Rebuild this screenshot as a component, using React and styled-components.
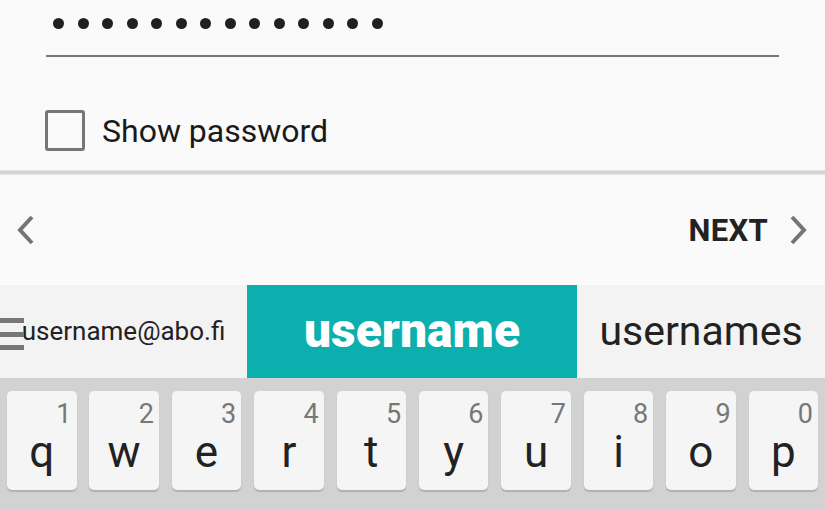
import React from 'react'
import styled, { createGlobalStyle } from 'styled-components'

const GlobalStyle = createGlobalStyle`
  body {
    margin: 0;
    background: #fafafa;
    font-family: Roboto, "Noto Sans", "Liberation Sans", sans-serif;
  }
`

const Screen = styled.div`
  width: 825px;
  height: 510px;
  display: flex;
  flex-direction: column;
  overflow: hidden;
  background: #fafafa;
`

const PasswordSection = styled.section`
  height: 170px;
  padding: 0 46px;
  box-sizing: border-box;
`

const Field = styled.div`
  display: flex;
  gap: 13.5px;
  padding: 18px 0 26px 7px;
  border-bottom: 2px solid #777;
`

const Dot = styled.span`
  width: 11px;
  height: 11px;
  border-radius: 50%;
  background: #202020;
`

const CheckRow = styled.label`
  display: flex;
  align-items: center;
  gap: 17px;
  margin-top: 53px;
  margin-left: -1px;
  font-size: 32px;
  color: #1a1a1a;
  line-height: 40px;
`

const Checkbox = styled.span`
  width: 40px;
  height: 41px;
  box-sizing: border-box;
  border: 3px solid #767676;
  border-radius: 3px;
  flex-shrink: 0;
`

const Divider = styled.div`
  height: 5px;
  background: linear-gradient(#e4e4e4, #cfcfcf 50%, #e8e8e8);
`

const NavBar = styled.nav`
  height: 110px;
  display: flex;
  align-items: center;
  justify-content: space-between;
  padding: 0 17px 0 16px;
`

const NavButton = styled.button`
  display: flex;
  align-items: center;
  gap: 20px;
  border: none;
  background: none;
  padding: 0;
  font-family: inherit;
  font-size: 31px;
  font-weight: 700;
  letter-spacing: 0.3px;
  color: #222;
`

const Suggestions = styled.div`
  height: 93px;
  display: grid;
  grid-template-columns: 247px 330px 1fr;
  background: #f3f3f3;
  position: relative;
`

const Suggestion = styled.div`
  display: flex;
  align-items: center;
  justify-content: center;
  color: ${(p) => (p.$active ? '#fff' : '#222')};
  background: ${(p) => (p.$active ? '#0aafae' : 'transparent')};
  font-size: ${(p) => p.$size}px;
  font-weight: ${(p) => (p.$active ? 900 : 400)};
  padding-bottom: 2px;
`

const MenuIcon = styled.svg`
  position: absolute;
  left: 0;
  top: 33px;
`

const Keyboard = styled.div`
  flex: 1;
  background: #d2d2d2;
  display: flex;
  gap: 12.9px;
  padding: 13px 0 0 7px;
`

const Key = styled.div`
  width: 69.5px;
  height: 99px;
  flex-shrink: 0;
  box-sizing: border-box;
  background: #f5f5f5;
  border-radius: 5px;
  box-shadow: 0 2px 1px rgba(0, 0, 0, 0.16);
  display: flex;
  flex-direction: column;
`

const Digit = styled.span`
  align-self: flex-end;
  padding: 8px 5px 0 0;
  font-size: 27px;
  line-height: 30px;
  color: #777;
`

const Letter = styled.span`
  text-align: center;
  font-size: 44px;
  line-height: 44px;
  color: #222;
  margin-top: 1px;
`

const Chevron = ({ left }) => (
  <svg width="20" height="30" viewBox="0 0 20 30">
    <polyline
      points={left ? '16,2 4,15 16,28' : '4,2 16,15 4,28'}
      fill="none"
      stroke="#757575"
      strokeWidth="4"
    />
  </svg>
)

const keys = [
  ['q', '1'], ['w', '2'], ['e', '3'], ['r', '4'], ['t', '5'],
  ['y', '6'], ['u', '7'], ['i', '8'], ['o', '9'], ['p', '0'],
]

export default function App() {
  return (
    <Screen>
      <GlobalStyle />
      <PasswordSection>
        <Field>
          {Array.from({ length: 14 }).map((_, i) => (
            <Dot key={i} />
          ))}
        </Field>
        <CheckRow>
          <Checkbox />
          Show password
        </CheckRow>
      </PasswordSection>
      <Divider />
      <NavBar>
        <NavButton>
          <Chevron left />
        </NavButton>
        <NavButton>
          NEXT
          <Chevron />
        </NavButton>
      </NavBar>
      <Suggestions>
        <MenuIcon width="24" height="33" viewBox="0 0 24 33">
          <rect x="0" y="0" width="24" height="5" fill="#777" />
          <rect x="0" y="14" width="24" height="5" fill="#777" />
          <rect x="0" y="27" width="24" height="5" fill="#777" />
        </MenuIcon>
        <Suggestion $size={26}>username@abo.fi</Suggestion>
        <Suggestion $active $size={48}>username</Suggestion>
        <Suggestion $size={41}>usernames</Suggestion>
      </Suggestions>
      <Keyboard>
        {keys.map(([l, d]) => (
          <Key key={l}>
            <Digit>{d}</Digit>
            <Letter>{l}</Letter>
          </Key>
        ))}
      </Keyboard>
    </Screen>
  )
}
